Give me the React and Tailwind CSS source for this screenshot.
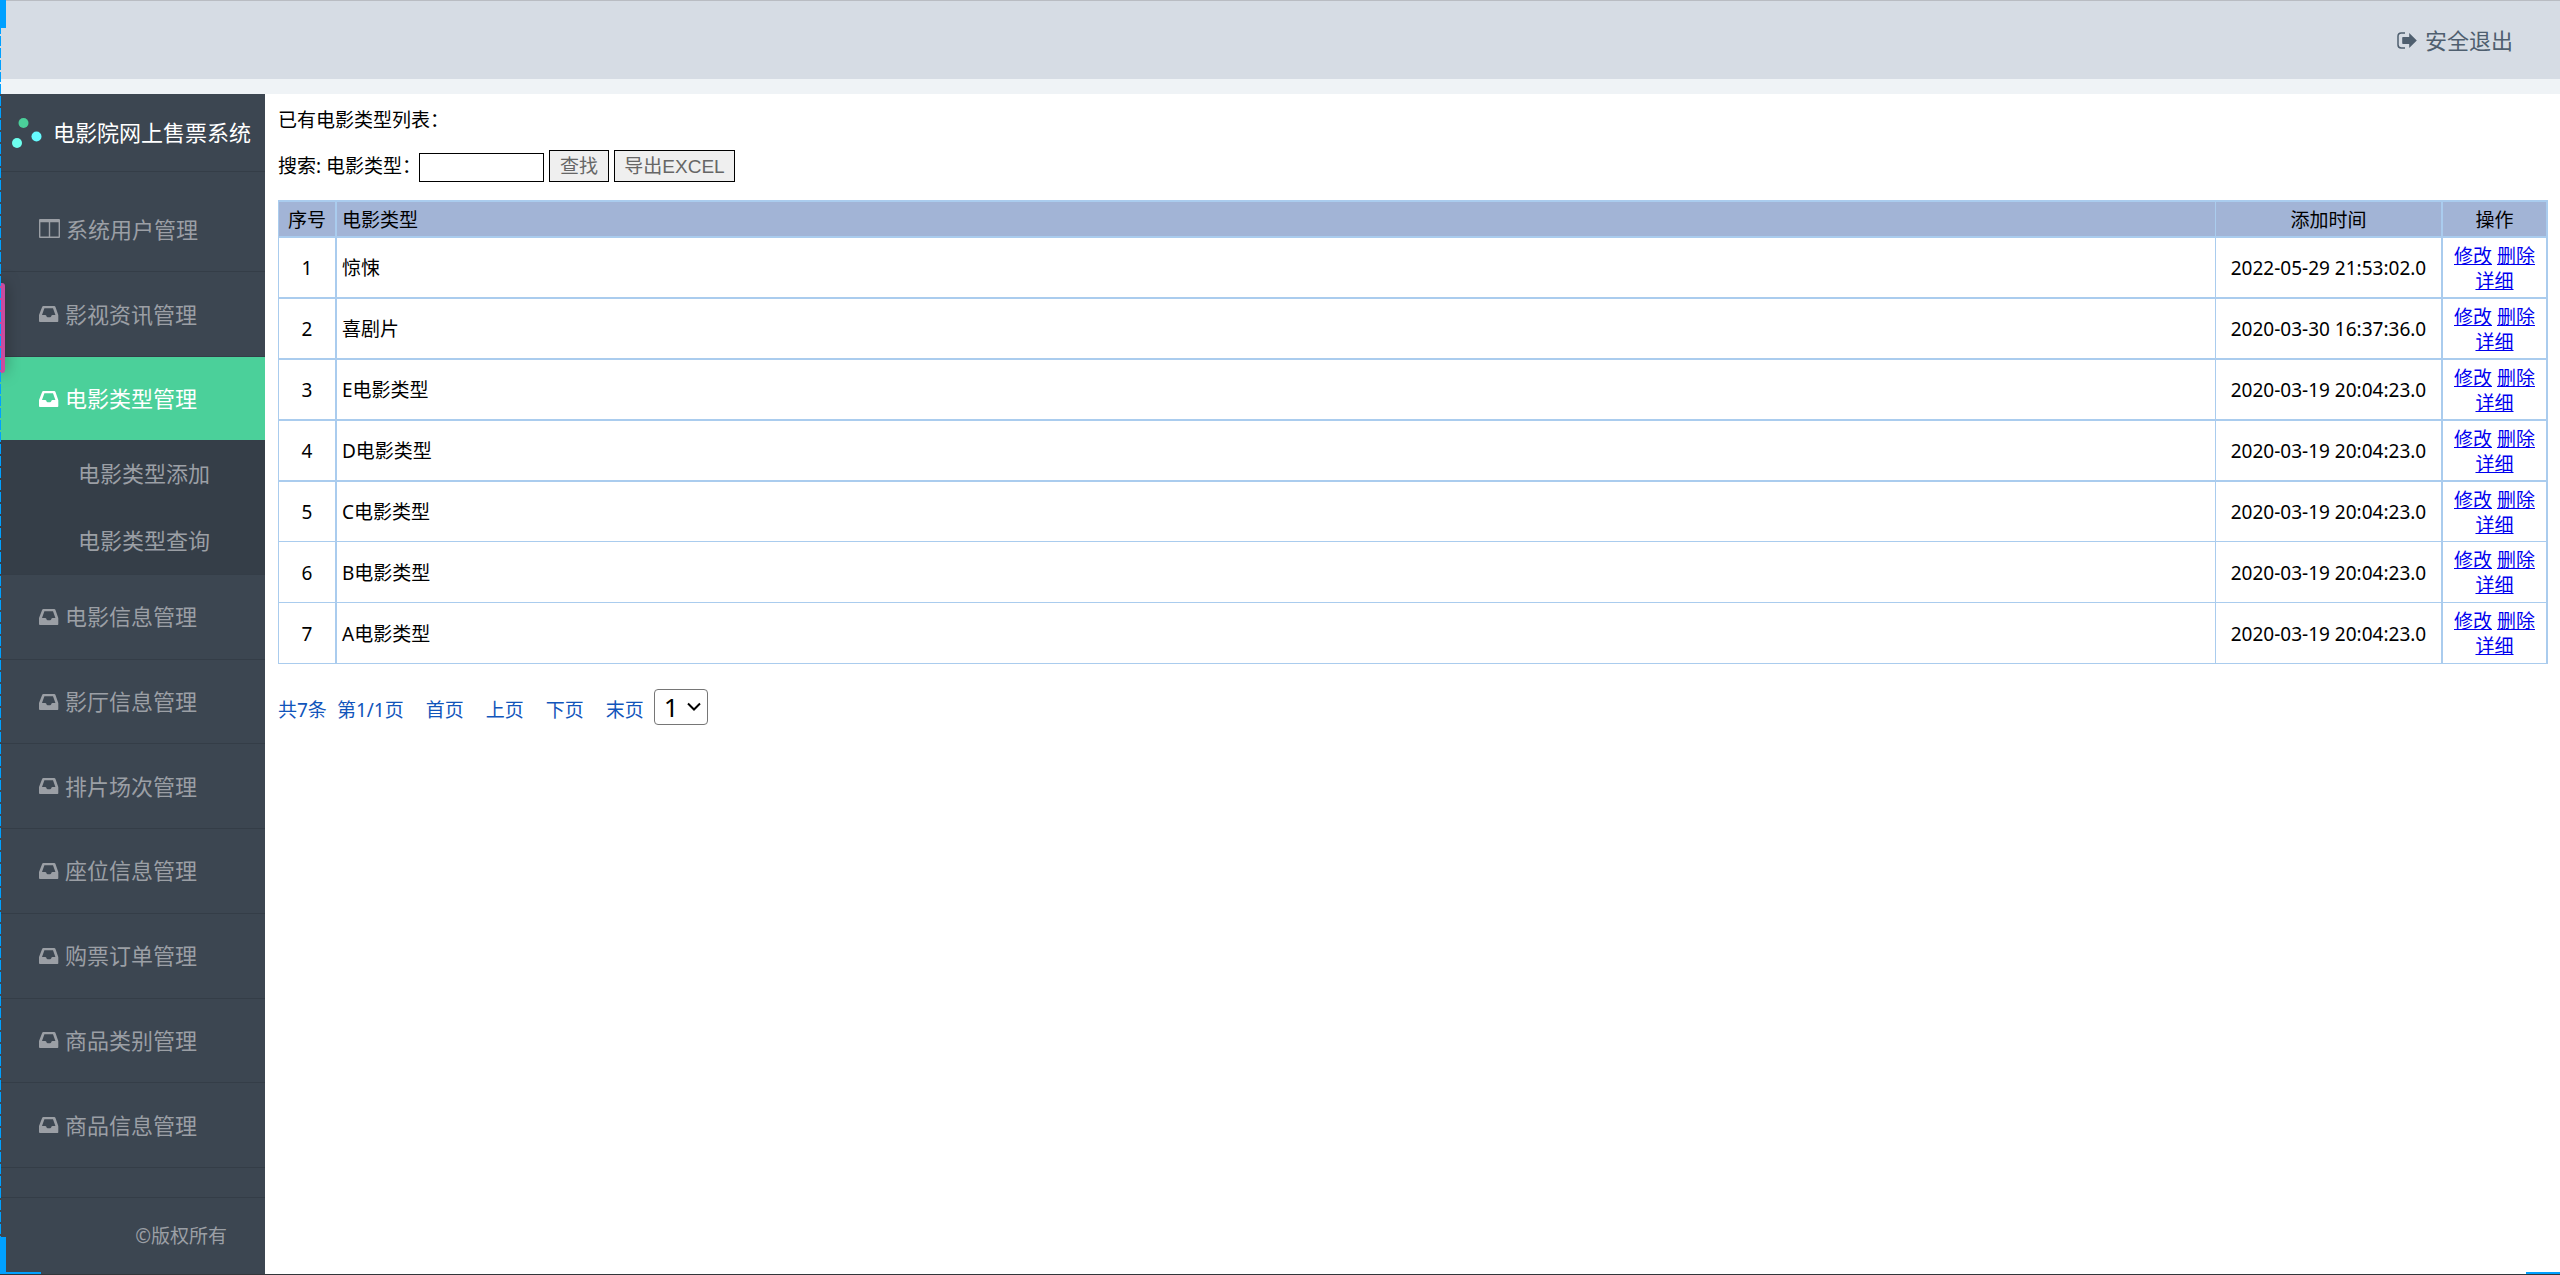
const rows = [
  ["1", "惊悚", "2022-05-29 21:53:02.0"],
  ["2", "喜剧片", "2020-03-30 16:37:36.0"],
  ["3", "E电影类型", "2020-03-19 20:04:23.0"],
  ["4", "D电影类型", "2020-03-19 20:04:23.0"],
  ["5", "C电影类型", "2020-03-19 20:04:23.0"],
  ["6", "B电影类型", "2020-03-19 20:04:23.0"],
  ["7", "A电影类型", "2020-03-19 20:04:23.0"],
];

const lowerMenu = [
  "电影信息管理",
  "影厅信息管理",
  "排片场次管理",
  "座位信息管理",
  "购票订单管理",
  "商品类别管理",
  "商品信息管理",
];

function InboxIcon() {
  return (
    <svg className="h-4 w-5 shrink-0" viewBox="0 0 20 16" fill="currentColor" aria-hidden="true">
      <path
        fillRule="evenodd"
        d="M4.4 0h10.800c.6 0 1 .3 1.200.8L19.100 8.400c.1.300.2.600.2.900V15c0 .6-.4 1-1 1H.9c-.6 0-.9-.4-.9-1V9.300c0-.3 0-.6.2-.9L3.200.8C3.400.3 3.800 0 4.400 0zM5.400 2.200 3 8.900h3.200c.5 0 .8.2 1 .6l.5 1.200c.2.300.5.500.9.500h2.500c.4 0 .7-.2.9-.5l.5-1.200c.2-.4.5-.6 1-.6h2.900L14 2.200z"
      />
    </svg>
  );
}

function ColumnsIcon() {
  return (
    <svg className="h-5 w-[21px] shrink-0" viewBox="0 0 21 20" fill="currentColor" aria-hidden="true">
      <path
        fillRule="evenodd"
        d="M1 0h19a1 1 0 0 1 1 1v17a1 1 0 0 1-1 1H1a1 1 0 0 1-1-1V1a1 1 0 0 1 1-1zM1.400 3.200V17.600H9.800V3.200zM11.200 3.200V17.600H19.600V3.200z"
      />
    </svg>
  );
}

function LogoutIcon() {
  return (
    <svg className="h-[17px] w-5" viewBox="0 0 20 17" aria-hidden="true">
      <path d="M8 1H4.200C2.200 1 1 2.200 1 4.200v8.600c0 2 1.200 3.200 3.200 3.200H8" fill="none" stroke="currentColor" strokeWidth="1.500" />
      <path d="M12.200 1 19.800 8.500l-7.600 7.500v-4H6c-.5 0-.8-.3-.8-.8V5.800c0-.5.3-.8.8-.8h6.200z" fill="currentColor" />
    </svg>
  );
}

function MenuItem({ children, columns, active }) {
  return (
    <li className={active ? "flex min-h-[83px] bg-[#4bd09a] text-white" : "flex min-h-[84px] border-b border-[#343d47]"}>
      <a href="#" className="flex grow items-center gap-[6px] pl-[39px]">
        {columns ? <ColumnsIcon /> : <InboxIcon />}
        {children}
      </a>
    </li>
  );
}

function Sidebar() {
  return (
    <aside className="flex w-[265px] shrink-0 flex-col bg-[#3c4651] text-[22px] text-[#9b9fa5]">
      <div className="flex h-[78px] items-center border-b border-[#343d47] pl-3 text-white">
        <svg className="h-[31px] w-[30px]" viewBox="0 0 30 31" aria-hidden="true">
          <circle cx="11.500" cy="6" r="5" fill="#4bd09a" />
          <circle cx="24.500" cy="19.500" r="5" fill="#66fbff" />
          <circle cx="5" cy="26" r="5" fill="#6dffee" />
        </svg>
        <h1 className="ml-[11px] whitespace-nowrap">电影院网上售票系统</h1>
      </div>
      <nav className="mt-[15px]">
        <ul className="grid h-[170px] auto-rows-fr">
          <MenuItem columns>系统用户管理</MenuItem>
          <MenuItem>影视资讯管理</MenuItem>
        </ul>
        <ul>
          <MenuItem active>电影类型管理</MenuItem>
          <li>
            <ul className="border-b border-[#343d47] bg-[#353e48]">
              {["电影类型添加", "电影类型查询"].map((t) => (
                <li key={t}>
                  <a href="#" className="flex h-[67px] items-center pl-[78px]">{t}</a>
                </li>
              ))}
            </ul>
          </li>
        </ul>
        <ul className="grid h-[593px] auto-rows-fr">
          {lowerMenu.map((t) => (
            <MenuItem key={t}>{t}</MenuItem>
          ))}
        </ul>
      </nav>
      <footer className="mt-[29px] flex grow items-center justify-end border-t border-[#343d47] pr-[38px] text-[19px]">
        ©版权所有
      </footer>
    </aside>
  );
}

const th = "h-9 border-b-2 border-[#aaccee] bg-[#a2b4d6] pt-0.5 font-normal";
const td = "border-[#aaccee] pt-0.5";

function TypeTable() {
  return (
    <table className="mt-[18px] w-full border-separate border-spacing-0 border-t-2 border-r-2 border-l border-[#aaccee]">
      <thead>
        <tr>
          <th className={th + " w-[58px] border-r-2"}>序号</th>
          <th className={th + " border-r pl-[5px] text-left"}>电影类型</th>
          <th className={th + " w-[227px] border-r-2"}>添加时间</th>
          <th className={th + " w-[103px]"}>操作</th>
        </tr>
      </thead>
      <tbody>
        {rows.map(([no, name, time], i) => {
          const line = i < 4 ? " h-[61px] border-b-2" : i === 4 ? " h-[60px] border-b" : " h-[61px] border-b";
          return (
            <tr key={no}>
              <td className={td + line + " border-r-2 text-center"}>{no}</td>
              <td className={td + line + " border-r pl-[5px]"}>{name}</td>
              <td className={td + line + " border-r-2 text-center whitespace-nowrap"}>{time}</td>
              <td className={td + line + " text-center leading-[25px] text-[#0000ee]"}>
                <a href="#" className="underline">修改</a> <a href="#" className="underline">删除</a>
                <br />
                <a href="#" className="underline">详细</a>
              </td>
            </tr>
          );
        })}
      </tbody>
    </table>
  );
}

function Pager() {
  return (
    <div className="mt-[25px] flex items-end leading-[30px] text-[#1155bb]">
      <span>共7条</span>
      <span className="ml-[10px]">第1/1页</span>
      <div className="ml-[22px] flex gap-[22px]">
        {["首页", "上页", "下页", "末页"].map((t) => (
          <a key={t} href="#">{t}</a>
        ))}
      </div>
      <div className="relative ml-[10px] text-black">
        <select aria-label="页码" className="block h-9 w-[54px] appearance-none rounded-[4px] border border-[#767676] bg-white pl-[9px] text-[26px] leading-none">
          <option>1</option>
        </select>
        <svg className="pointer-events-none absolute top-[13px] right-[7px] h-[10px] w-[14px]" viewBox="0 0 14 10" fill="none" stroke="currentColor" strokeWidth="2" aria-hidden="true">
          <path d="M1 1.500 7 7.500 13 1.500" />
        </svg>
      </div>
    </div>
  );
}

function SelectionFrame() {
  return (
    <div className="pointer-events-none absolute inset-0 overflow-hidden">
      <div className="absolute top-[283px] left-0 h-[90px] w-[5px] rounded-r-[3px] bg-[#c94b9f] shadow-[0_0_14px_rgba(0,0,0,0.5)]" />
      <div className="absolute inset-y-0 left-0 w-px bg-[repeating-linear-gradient(to_bottom,#00a0ff_0_10px,transparent_10px_12px)]" />
      <div className="absolute top-0 left-0 h-7 w-[6px] bg-[#00a0ff]" />
      <div className="absolute inset-x-0 bottom-0 h-px bg-[#33363a]" />
      <div className="absolute bottom-px left-0 h-[37px] w-[6px] bg-[#00a0ff]" />
      <div className="absolute bottom-px left-0 h-[2px] w-[41px] bg-[#00a0ff]" />
      <div className="absolute right-0 bottom-px h-[2px] w-[34px] bg-[#00a0ff]" />
    </div>
  );
}

export default function App() {
  return (
    <div className="relative flex min-h-screen flex-col bg-white font-['Noto_Sans','Noto_Sans_CJK_SC',sans-serif] text-[19px] text-black">
      <header className="flex h-[79px] items-center justify-end border-t border-[#b9bcc2] bg-[#d6dce4] pr-[47px] text-[22px] text-[#4f5f6f]">
        <a href="#" className="flex items-center gap-2">
          <LogoutIcon />
          安全退出
        </a>
      </header>
      <div className="h-[15px] bg-[#eff3f6]" />
      <div className="flex grow">
        <Sidebar />
        <main className="min-w-0 grow pr-3 pl-[13px]">
          <p className="mt-3 leading-7">已有电影类型列表：</p>
          <form className="mt-4 flex items-end" onSubmit={(e) => e.preventDefault()}>
            <label htmlFor="type" className="w-[141px] leading-8 whitespace-nowrap">搜索: 电影类型：</label>
            <input id="type" type="text" className="h-[29px] w-[125px] border border-black bg-white px-1" />
            <button type="submit" className="ml-[5px] h-8 w-[60px] border border-black bg-[#efefef] font-['Liberation_Sans','Noto_Sans_CJK_SC',sans-serif] leading-none text-[#666666]">查找</button>
            <button type="button" className="ml-[5px] h-8 w-[121px] border border-black bg-[#efefef] font-['Liberation_Sans','Noto_Sans_CJK_SC',sans-serif] leading-none whitespace-nowrap text-[#666666]">导出EXCEL</button>
          </form>
          <TypeTable />
          <Pager />
        </main>
      </div>
      <SelectionFrame />
    </div>
  );
}
